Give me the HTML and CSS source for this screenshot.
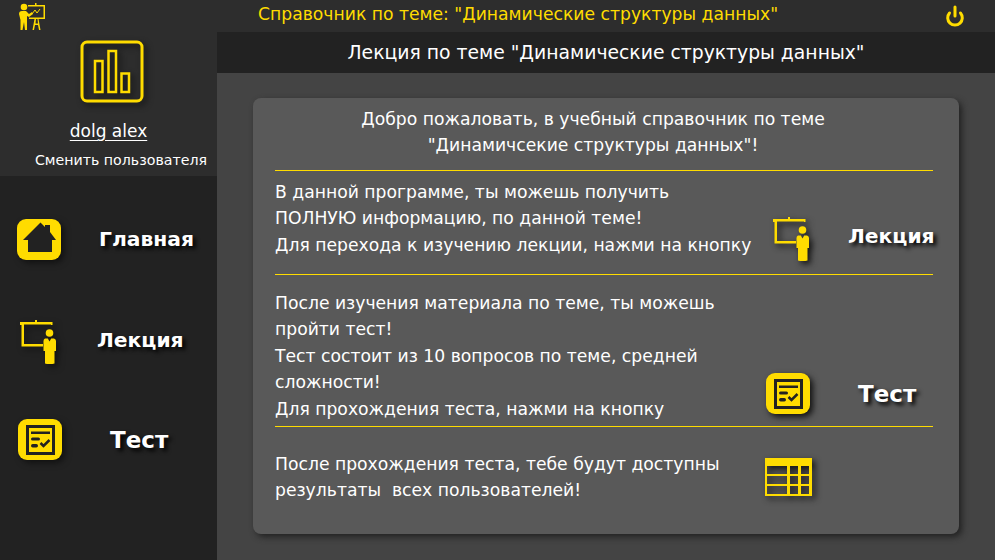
FILE: index.html
```html
<!DOCTYPE html>
<html>
<head>
    <title>Справочник</title>
    <link rel="stylesheet" href="styles.css">
</head>
<body>
    <svg class="defs" width="0" height="0">
        <symbol id="icon-lecture" viewBox="0 0 36 44">
            <path d="M15 0h2v2h15.500v3H31V4.500H4v19.500h19v2.500H1.500V5H0V2h15z" fill="#ffdc00"/>
            <circle cx="29.500" cy="13" r="3.800" fill="#ffdc00"/>
            <path d="M25 18.500h2.800l1.700 3 1.700-3H34q2 .5 2 2.500v10h-1.500v12.500q-5 1.500-9.500 0V31h-1.500V21q0-2 1.500-2.500z" fill="#ffdc00"/>
        </symbol>
        <symbol id="icon-test" viewBox="0 0 44 41">
            <rect width="44" height="41" rx="9" fill="#ffdc00"/>
            <rect x="9.500" y="7.500" width="26" height="27" fill="none" stroke="#222" stroke-width="3"/>
            <path d="M13 12.500h19v2.500H13z" fill="#222"/>
            <rect x="13" y="18.500" width="9" height="3" rx="1.500" fill="#222"/>
            <rect x="13" y="25" width="7" height="3.500" rx="1.700" fill="#222"/>
            <path d="M22.500 24l3 3 6-6" fill="none" stroke="#222" stroke-width="2.500"/>
        </symbol>
    </svg>

    <div class="app">
        <aside class="sidebar">
            <div class="top-icon">
                <svg class="presenter" width="27" height="27" viewBox="0 0 27 27" fill="#ffdc00">
                    <circle cx="6" cy="4" r="3.300"/>
                    <path d="M1 11q0-3 3-3h4l3 3 3-2 1 2-4 3-2-1v4H2.500z"/>
                    <path d="M2.500 17H9v10H7l-1-8-1.500 8h-2z"/>
                    <path d="M10 2h7V0h1.500v2H27v14h-6.500l2 11h-1.500l-1-5h-3l-1 5h-1.500l2-11H11v-1.500h14.500v-11H10zM18 16l-.5 4.500h2.500L19.500 16z"/>
                    <path d="M14 11l3-4 2 3 3-4" fill="none" stroke="#ffdc00" stroke-width="1"/>
                </svg>
            </div>
            <div class="profile">
                <svg class="chart" width="64" height="64" viewBox="0 0 64 64" fill="none" stroke="#ffdc00">
                    <rect x="2" y="2" width="60" height="59" rx="5" stroke-width="3"/>
                    <rect x="15" y="21" width="7.500" height="31" stroke-width="2.500"/>
                    <rect x="28.500" y="11" width="7.500" height="41" stroke-width="2.500"/>
                    <rect x="41.500" y="33.500" width="7.500" height="18.500" stroke-width="2.500"/>
                </svg>
                <a class="user-name">dolg alex</a>
                <a class="change-user">Сменить пользователя</a>
            </div>
            <nav class="menu">
                <div class="menu-item item-home">
                    <svg class="shadow-icon" width="44" height="41" viewBox="0 0 44 41">
                        <rect width="44" height="41" rx="9" fill="#ffdc00"/>
                        <path d="M6 21L23.500 3.500 28 8V6h5v7l6 8h-4v12H11V21z" fill="#222"/>
                    </svg>
                    <span class="menu-label">Главная</span>
                </div>
                <div class="menu-item item-lecture">
                    <svg class="shadow-icon" width="36" height="44"><use href="#icon-lecture"/></svg>
                    <span class="menu-label">Лекция</span>
                </div>
                <div class="menu-item item-test">
                    <svg class="shadow-icon" width="44" height="41"><use href="#icon-test"/></svg>
                    <span class="menu-label label-test">Тест</span>
                </div>
            </nav>
        </aside>

        <div class="content">
            <div class="title-bar">
                <span class="app-title">Справочник по теме: "Динамические структуры данных"</span>
                <svg class="power" width="18" height="22" viewBox="0 0 18 22" fill="none" stroke="#ffdc00" stroke-width="3" stroke-linecap="round">
                    <path d="M3.500 8a7.300 7.300 0 1 0 11 0"/>
                    <path d="M9 2v9"/>
                </svg>
            </div>
            <h1 class="page-title">Лекция по теме "Динамические структуры данных"</h1>
            <main class="main">
                <section class="card">
                    <div class="welcome">
                        Добро пожаловать, в учебный справочник по теме<br>
                        "Динамичсекие структуры данных"!
                    </div>
                    <div class="row row-lecture">
                        <p>В данной программе, ты можешь получить<br>ПОЛНУЮ информацию, по данной теме!<br>Для перехода к изучению лекции, нажми на кнопку</p>
                        <div class="action">
                            <svg class="shadow-icon" width="36" height="44"><use href="#icon-lecture"/></svg>
                            <span class="menu-label">Лекция</span>
                        </div>
                    </div>
                    <div class="row row-test">
                        <p>После изучения материала по теме, ты можешь<br>пройти тест!<br>Тест состоит из 10 вопросов по теме, средней<br>сложности!<br>Для прохождения теста, нажми на кнопку</p>
                        <div class="action">
                            <svg class="shadow-icon" width="44" height="41"><use href="#icon-test"/></svg>
                            <span class="menu-label label-test">Тест</span>
                        </div>
                    </div>
                    <div class="row row-results">
                        <p>После прохождения теста, тебе будут доступны<br>результаты&nbsp; всех пользователей!</p>
                        <div class="action">
                            <svg class="shadow-icon" width="47" height="39" viewBox="0 0 47 39">
                                <path fill-rule="evenodd" fill="#ffdc00" d="M0 0h47v38H0zM2 8v8h20V8zM25 8v8h8V8zM36 8v8h8V8zM2 18v8h20v-8zM25 18v8h8v-8zM36 18v8h8v-8zM2 28v8h20v-8zM25 28v8h8v-8zM36 28v8h8v-8z"/>
                            </svg>
                        </div>
                    </div>
                </section>
            </main>
        </div>
    </div>
</body>
</html>
```

FILE: styles.css
```css
html, body {
    margin: 0;
    height: 100%;
    overflow: hidden;
}
body {
    font-family: "DejaVu Sans", sans-serif;
    color: #fff;
    background-color: #444;
}
.defs {
    position: absolute;
}
.app {
    display: flex;
    height: 560px;
}

/* left column */
.sidebar {
    width: 217px;
    flex: none;
    background-color: #222;
}
.top-icon {
    height: 32px;
    padding: 3px 0 0 18px;
    box-sizing: border-box;
    background-color: #2d2d2d;
}
.profile {
    height: 144px;
    background-color: #2d2d2d;
    display: flex;
    flex-direction: column;
    align-items: center;
    padding-top: 8px;
    box-sizing: border-box;
}
.chart {
    filter: drop-shadow(3px 3px 3px #111);
    margin-left: 7px;
}
.user-name {
    margin-top: 15px;
    font-size: 17px;
    line-height: 24px;
    text-decoration: underline;
    text-underline-offset: 3px;
}
.change-user {
    margin: 8px 0 0 25px;
    font-size: 14.200px;
    line-height: 18px;
}
.menu {
    padding-left: 17px;
}
.menu-item {
    display: flex;
    align-items: center;
    height: 44px;
}
.item-home {
    margin-top: 41px;
}
.item-lecture {
    margin-top: 59px;
}
.item-test {
    margin-top: 53px;
}
.menu-label {
    font-size: 20.300px;
    line-height: 24px;
    font-weight: bold;
    text-shadow: 3px 3px 4px #000;
}
.label-test {
    font-size: 23px;
}
.shadow-icon {
    flex: none;
    filter: drop-shadow(3px 3px 3px #111);
}
.item-home .menu-label {
    margin-left: 38px;
}
.item-lecture .menu-label {
    margin: 0 0 4px 41px;
}
.item-lecture .shadow-icon {
    margin-left: 3px;
}
.item-test .menu-label {
    margin: 2px 0 0 48px;
}
.item-test .shadow-icon {
    margin-left: 1px;
}

/* right part */
.content {
    flex: 1;
    display: flex;
    flex-direction: column;
    min-width: 0;
}
.title-bar {
    height: 32px;
    background-color: #2d2d2d;
    display: flex;
    align-items: center;
    padding-left: 41px;
    padding-right: 31px;
    justify-content: space-between;
}
.app-title {
    color: #ffdc00;
    font-size: 17.200px;
    margin-bottom: 5px;
}
.page-title {
    margin: 0;
    height: 41px;
    line-height: 41px;
    background-color: #222;
    font-size: 18.800px;
    font-weight: normal;
    text-align: center;
}
.main {
    flex: 1;
    padding: 25px 36px 26px 36px;
}
.card {
    height: 436px;
    box-sizing: border-box;
    background-color: #595959;
    border-radius: 8px;
    box-shadow: 3px 3px 6px #222;
    padding: 0 26px 0 22px;
    font-size: 17.200px;
    line-height: 26.400px;
}
.welcome {
    height: 73px;
    box-sizing: border-box;
    padding: 8px 22px 0 0;
    text-align: center;
    border-bottom: 1px solid #ffdc00;
}
.row {
    display: flex;
    border-bottom: 1px solid #ffdc00;
    box-sizing: border-box;
}
.row p {
    margin: 0;
    width: 490px;
    flex: none;
    white-space: nowrap;
}
.row-lecture {
    height: 104px;
    padding-top: 8px;
}
.row-test {
    height: 152px;
    padding-top: 15px;
}
.row-results {
    height: 100px;
    padding-top: 24px;
    border-bottom: none;
}
.action {
    display: flex;
    align-items: flex-start;
}
.row-lecture .action {
    margin: 38px 0 0 8px;
}
.row-lecture .menu-label {
    margin: 7px 0 0 39px;
}
.row-test .action {
    margin: 83px 0 0 1px;
}
.row-test .menu-label {
    margin: 9px 0 0 48px;
}
.row-results .action {
    margin-top: 7px;
}
```
